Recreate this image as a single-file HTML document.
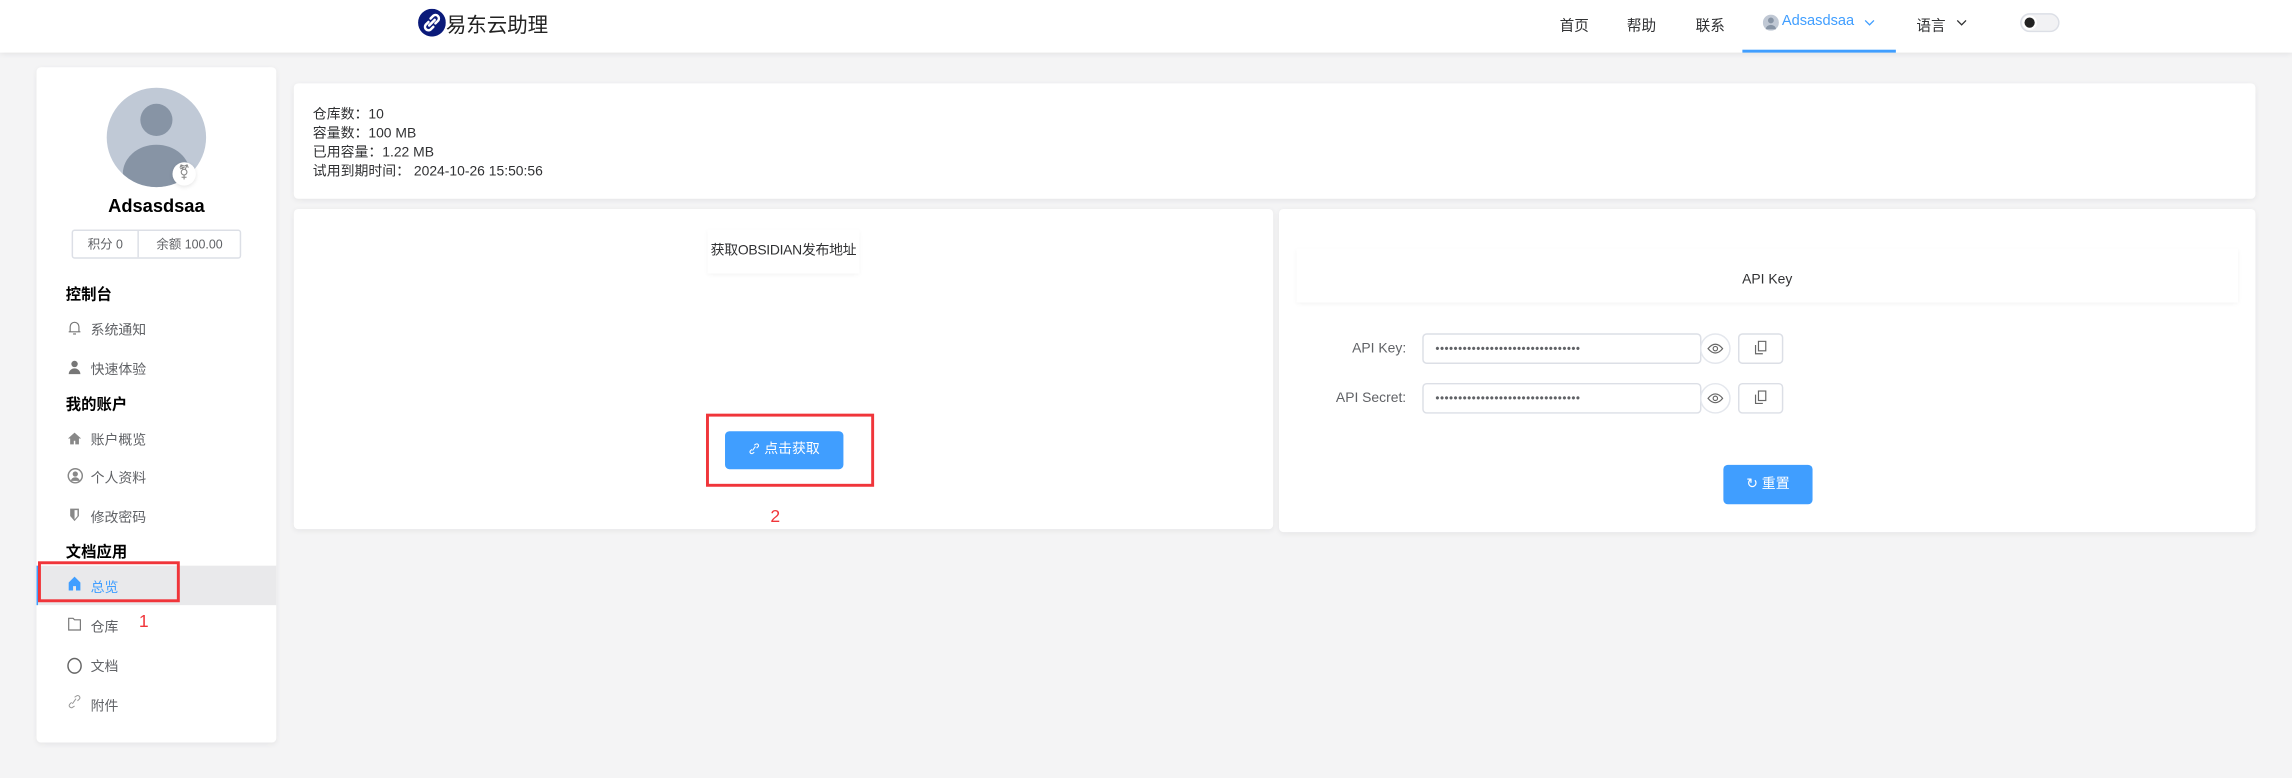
<!DOCTYPE html>
<html><head><meta charset="utf-8">
<style>
*{box-sizing:border-box;margin:0;padding:0}
html,body{width:2292px;height:778px;overflow:hidden;background:#f4f4f5}
body{font-family:"Liberation Sans","Noto Sans CJK SC",sans-serif;color:#303133}
#w{position:absolute;left:0;top:0;width:1568px;height:532px;transform:scale(1.46173);transform-origin:0 0;background:#f4f4f5}
.a{position:absolute}
.hdr{left:0;top:0;width:1568px;height:36px;background:#fff;box-shadow:0 1px 4px rgba(0,0,0,.08)}
.nav{font-size:10px;color:#303133;top:9px}
.card{background:#fff;border-radius:3px;box-shadow:0 1px 4px rgba(0,0,0,.06)}
.side{font-size:9.5px;color:#606266;left:62px}
.sh{font-size:10.5px;font-weight:bold;color:#000;left:45px}
.ic{left:46px;width:10px;height:10px}
.inp{width:191px;height:21px;border:1px solid #dcdfe6;border-radius:3px;background:#fff;font-size:8px;color:#606266;padding-left:8px;line-height:19px;letter-spacing:.3px;overflow:hidden;white-space:nowrap}
.eye{width:21px;height:21px;border:1px solid #e4e7ed;border-radius:50%;background:#fff}
.cp{width:31px;height:21px;border:1px solid #dcdfe6;border-radius:3px;background:#fff}
.lbl{font-size:9.5px;color:#606266;text-align:right;width:90px}
</style></head><body><div id="w">
<div class="a hdr"></div>
<svg class="a" style="left:286px;top:6px" width="19" height="19" viewBox="0 0 20 20"><circle cx="10" cy="10" r="10" fill="#0a1a7a"/><path d="M8 12l4-4M9 7l2-2a2.5 2.5 0 0 1 3.5 3.5l-2 2M11 13l-2 2a2.5 2.5 0 0 1-3.5-3.5l2-2" stroke="#fff" stroke-width="1.8" fill="none" stroke-linecap="round"/></svg>
<div class="a" style="left:305px;top:7px;font-size:14px;color:#222">易东云助理</div>
<div class="a nav" style="left:1067px">首页</div>
<div class="a nav" style="left:1113px">帮助</div>
<div class="a nav" style="left:1160px">联系</div>
<svg class="a" style="left:1206px;top:10px" width="11" height="11" viewBox="0 0 11 11"><circle cx="5.5" cy="5.5" r="5.5" fill="#c0c8d4"/><circle cx="5.5" cy="4" r="2" fill="#8794a5"/><path d="M2 10a3.5 3 0 0 1 7 0z" fill="#8794a5"/></svg>
<div class="a nav" style="left:1219px;color:#409eff">Adsasdsaa</div>
<svg class="a" style="left:1275px;top:13px" width="8" height="5"><path d="M1 1l3 3 3-3" stroke="#409eff" fill="none" stroke-width=".9"/></svg>
<div class="a" style="left:1192px;top:34px;width:105px;height:2px;background:#409eff"></div>
<div class="a nav" style="left:1311px">语言</div>
<svg class="a" style="left:1338px;top:13px" width="8" height="5"><path d="M1 1l3 3 3-3" stroke="#303133" fill="none" stroke-width=".9"/></svg>
<div class="a" style="left:1382px;top:9px;width:27px;height:13px;border:1px solid #dcdfe6;border-radius:7px;background:#f2f2f4"></div>
<div class="a" style="left:1385px;top:12px;width:7px;height:7px;border-radius:50%;background:#222;box-shadow:0 0 0 1.5px #fff"></div>

<!-- sidebar -->
<div class="a card" style="left:25px;top:46px;width:164px;height:462px"></div>
<div class="a" style="left:73px;top:60px;width:68px;height:68px;border-radius:50%;background:#c0c9d6;overflow:hidden">
<div class="a" style="left:23px;top:11px;width:22px;height:22px;border-radius:50%;background:#8794a5"></div>
<div class="a" style="left:11px;top:39px;width:46px;height:40px;border-radius:50%;background:#8794a5"></div></div>
<div class="a" style="left:118px;top:111px;width:16px;height:16px;border-radius:50%;background:#fff;box-shadow:0 1px 3px rgba(0,0,0,.1);font-size:10px;color:#888;text-align:center;line-height:16px">⚧</div>
<div class="a" style="left:25px;top:134px;width:164px;text-align:center;font-size:12.5px;font-weight:bold;color:#000">Adsasdsaa</div>
<div class="a" style="left:49px;top:157px;width:116px;height:20px;border:1px solid #dcdfe6;border-radius:2px;font-size:8.5px;color:#606266;line-height:18px">
<span class="a" style="left:10px">积分 0</span><span class="a" style="left:44px;top:0;width:1px;height:18px;background:#dcdfe6"></span><span class="a" style="left:57px">余额 100.00</span></div>
<div class="a sh" style="top:194px">控制台</div>
<svg class="a ic" style="top:219px" viewBox="0 0 10 10"><path d="M2 8V4.5a3 3 0 0 1 6 0V8M1 8h8M4 9.5h2" stroke="#777" fill="none" stroke-width=".8"/></svg>
<div class="a side" style="top:218px">系统通知</div>
<svg class="a ic" style="top:246px" viewBox="0 0 10 10"><circle cx="5" cy="3" r="2.2" fill="#777"/><path d="M1 10a4 4 0 0 1 8 0z" fill="#777"/></svg>
<div class="a side" style="top:245px">快速体验</div>
<div class="a sh" style="top:269px">我的账户</div>
<svg class="a ic" style="top:295px" viewBox="0 0 10 10"><path d="M5 1L0.5 5H2v4h2.5V6.5h1V9H8V5h1.5z" fill="#888"/></svg>
<div class="a side" style="top:293px">账户概览</div>
<svg class="a ic" style="top:320px;width:11px;height:11px" viewBox="0 0 11 11"><circle cx="5.5" cy="5.5" r="4.8" stroke="#888" fill="#fff"/><circle cx="5.5" cy="4.3" r="1.8" fill="#888"/><path d="M2.5 9a3 2.5 0 0 1 6 0" fill="#888"/></svg>
<div class="a side" style="top:319px">个人资料</div>
<svg class="a ic" style="top:347px" viewBox="0 0 10 10"><path d="M2 1h6v5l-3 3.5L2 6z" fill="#888"/><path d="M5 2h2v4l-2 2.3z" fill="#fff"/></svg>
<div class="a side" style="top:346px">修改密码</div>
<div class="a sh" style="top:370px">文档应用</div>
<div class="a" style="left:25px;top:387px;width:164px;height:27px;background:#e9e9eb;border-left:1px solid #409eff"></div>
<svg class="a ic" style="top:394px" viewBox="0 0 10 10"><path d="M5 0.5L1 4.5V10h3V7h2v3h3V4.5z" fill="#409eff"/></svg>
<div class="a side" style="top:394px;color:#409eff">总览</div>
<div class="a" style="left:26px;top:384px;width:97px;height:28px;border:2px solid #f0353a"></div>
<svg class="a ic" style="top:422px" viewBox="0 0 10 10"><path d="M1 1h3l1 1h4v7H1z" stroke="#777" fill="none" stroke-width=".8"/></svg>
<div class="a side" style="top:421px">仓库</div>
<div class="a" style="left:95px;top:418px;font-size:12px;color:#f0353a">1</div>
<div class="a" style="left:46px;top:450px;width:10px;height:11px;border:1.6px solid #666;border-radius:50%"></div>
<div class="a side" style="top:448px">文档</div>
<svg class="a ic" style="top:475px" viewBox="0 0 10 10"><path d="M6 3L3.5 6.5M5 2l1.5-1a1.5 1.5 0 0 1 2 2L7 4.5M5 8l-1.5 1a1.5 1.5 0 0 1-2-2L3 5.5" stroke="#999" fill="none" stroke-width=".7"/></svg>
<div class="a side" style="top:475px">附件</div>

<!-- info -->
<div class="a card" style="left:201px;top:57px;width:1342px;height:79px"></div>
<div class="a" style="left:214px;top:72px;font-size:9.5px;line-height:13px;color:#303133">仓库数：10<br>容量数：100 MB<br>已用容量：1.22 MB<br>试用到期时间：&nbsp;2024-10-26 15:50:56</div>

<!-- left bottom -->
<div class="a card" style="left:201px;top:143px;width:670px;height:219px"></div>
<div class="a" style="left:484px;top:157px;width:104px;height:30px;box-shadow:0 1px 3px rgba(0,0,0,.05);font-size:9.5px;line-height:30px;text-align:center;white-space:nowrap;letter-spacing:-.2px">获取OBSIDIAN发布地址</div>
<div class="a" style="left:496px;top:295px;width:81px;height:26px;background:#409eff;border-radius:3px;color:#fff;font-size:9.5px;line-height:26px;text-align:center"><svg width="8" height="8" viewBox="0 0 10 10" style="vertical-align:-1px"><path d="M6 3L3.5 6.5M5 2l1.5-1a1.5 1.5 0 0 1 2 2L7 4.5M5 8l-1.5 1a1.5 1.5 0 0 1-2-2L3 5.5" stroke="#fff" fill="none" stroke-width=".9"/></svg>&nbsp;点击获取</div>
<div class="a" style="left:483px;top:283px;width:115px;height:50px;border:2px solid #f0353a"></div>
<div class="a" style="left:527px;top:346px;font-size:12px;color:#f0353a">2</div>

<!-- right -->
<div class="a card" style="left:875px;top:143px;width:668px;height:221px"></div>
<div class="a" style="left:887px;top:170px;width:644px;height:37px;box-shadow:0 1px 3px rgba(0,0,0,.05);font-size:9.5px;line-height:44px;text-align:center">API Key</div>
<div class="a lbl" style="left:872px;top:233px">API Key:</div>
<div class="a inp" style="left:973px;top:228px">••••••••••••••••••••••••••••••••</div>
<div class="a eye" style="left:1163px;top:228px"></div>
<svg class="a" style="left:1168px;top:234px" width="11" height="9" viewBox="0 0 11 9"><path d="M.5 4.5Q5.5-1.5 10.5 4.5Q5.5 10.5.5 4.5z" stroke="#666" fill="none" stroke-width=".8"/><circle cx="5.5" cy="4.5" r="1.5" stroke="#666" fill="none" stroke-width=".8"/></svg>
<div class="a cp" style="left:1189px;top:228px"></div>
<svg class="a" style="left:1200px;top:233px" width="9" height="10" viewBox="0 0 9 10"><rect x="3" y=".5" width="5" height="6.5" stroke="#666" fill="none" stroke-width=".8"/><path d="M1 3v6h5" stroke="#666" fill="none" stroke-width=".8"/></svg>
<div class="a lbl" style="left:872px;top:267px">API Secret:</div>
<div class="a inp" style="left:973px;top:262px">••••••••••••••••••••••••••••••••</div>
<div class="a eye" style="left:1163px;top:262px"></div>
<svg class="a" style="left:1168px;top:268px" width="11" height="9" viewBox="0 0 11 9"><path d="M.5 4.5Q5.5-1.5 10.5 4.5Q5.5 10.5.5 4.5z" stroke="#666" fill="none" stroke-width=".8"/><circle cx="5.5" cy="4.5" r="1.5" stroke="#666" fill="none" stroke-width=".8"/></svg>
<div class="a cp" style="left:1189px;top:262px"></div>
<svg class="a" style="left:1200px;top:267px" width="9" height="10" viewBox="0 0 9 10"><rect x="3" y=".5" width="5" height="6.5" stroke="#666" fill="none" stroke-width=".8"/><path d="M1 3v6h5" stroke="#666" fill="none" stroke-width=".8"/></svg>
<div class="a" style="left:1179px;top:318px;width:61px;height:27px;background:#409eff;border-radius:3px;color:#fff;font-size:9.5px;line-height:27px;text-align:center">↻&nbsp;重置</div>
</div></body></html>
